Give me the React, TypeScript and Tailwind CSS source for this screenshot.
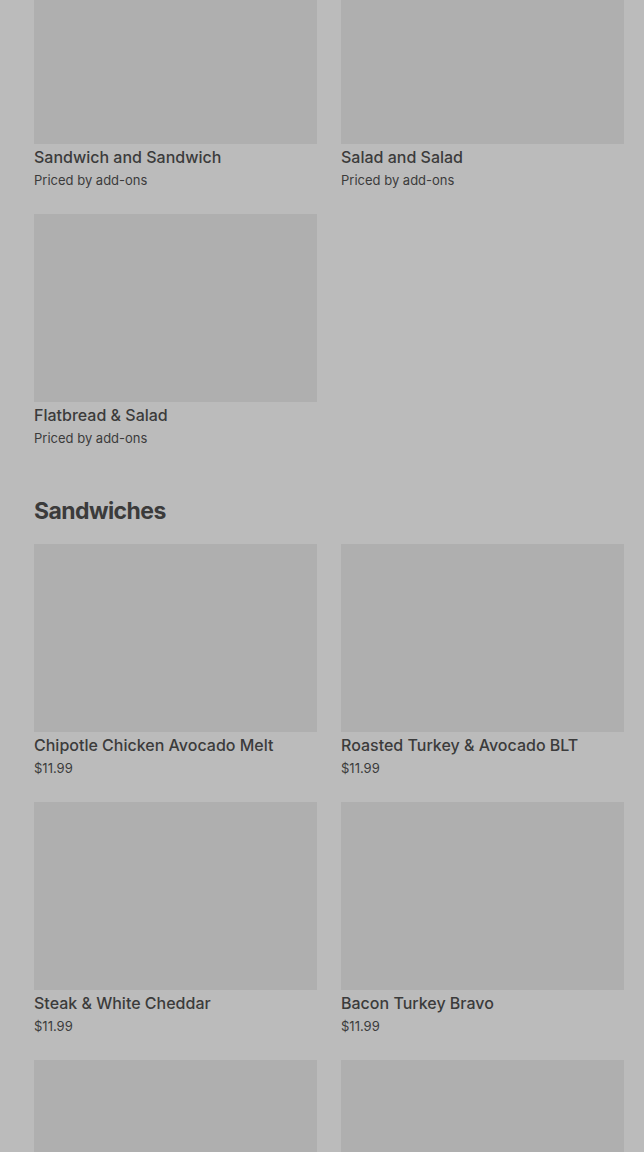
const combos = [
  { name: 'Sandwich and Sandwich', price: 'Priced by add-ons' },
  { name: 'Salad and Salad', price: 'Priced by add-ons' },
  { name: 'Flatbread & Salad', price: 'Priced by add-ons' },
];

const sandwiches = [
  { name: 'Chipotle Chicken Avocado Melt', price: '$11.99' },
  { name: 'Roasted Turkey & Avocado BLT', price: '$11.99' },
  { name: 'Steak & White Cheddar', price: '$11.99' },
  { name: 'Bacon Turkey Bravo', price: '$11.99' },
  { name: '', price: '' },
  { name: '', price: '' },
];

function ItemCard({ name, price }: { name: string; price: string }) {
  return (
    <div className="flex flex-col">
      <div className="h-[188px] w-full bg-[#afafaf]" />
      <div className="mt-[1px] text-[16px] leading-6 font-medium text-[#3b3b3b] truncate">{name}</div>
      <div className="mt-[1px] text-[13px] leading-5 text-[#3b3b3b]">{price}</div>
    </div>
  );
}

export default function App() {
  return (
    <main
      className="h-[1152px] overflow-hidden bg-[#bbbbbb]"
      style={{ fontFamily: 'Inter, "Noto Sans", sans-serif' }}
    >
      <div className="-mt-[44px] pl-[34px] pr-[20px]">
        <div className="grid grid-cols-2 gap-x-6 gap-y-6">
          {combos.map((c) => (
            <ItemCard key={c.name} {...c} />
          ))}
        </div>

        <h2 className="mt-[49px] mb-[19px] text-[23px] leading-7 font-bold tracking-tight text-[#3b3b3b]">
          Sandwiches
        </h2>

        <div className="grid grid-cols-2 gap-x-6 gap-y-6">
          {sandwiches.map((s, i) => (
            <ItemCard key={i} {...s} />
          ))}
        </div>
      </div>
    </main>
  );
}
